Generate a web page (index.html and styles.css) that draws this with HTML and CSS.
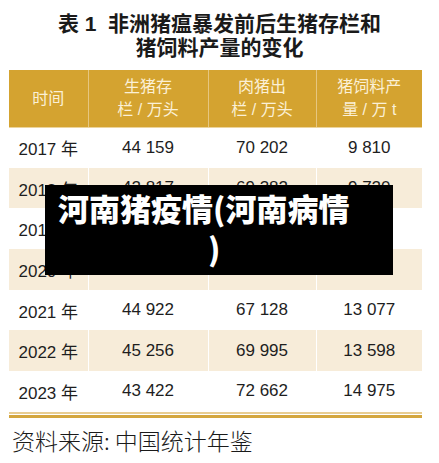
FILE: index.html
```html
<!DOCTYPE html>
<html lang="zh-CN">
<head>
  <meta charset="UTF-8" />
  <meta name="viewport" content="width=device-width, initial-scale=1.0"/>
  <title>河南猪疫情</title>
  <link rel="stylesheet" href="styles.css">
</head>
<body>

  <h1 class="title">表 1&nbsp; 非洲猪瘟暴发前后生猪存栏和<br>猪饲料产量的变化</h1>

  <table class="data">
    <colgroup>
      <col class="c1"><col class="c2"><col class="c3"><col class="c4">
    </colgroup>
    <thead>
      <tr>
        <th>时间</th>
        <th>生猪存<br>栏 / 万头</th>
        <th>肉猪出<br>栏 / 万头</th>
        <th>猪饲料产<br>量 / 万 t</th>
      </tr>
    </thead>
    <tbody>
      <tr><td>2017 年</td><td>44 159</td><td>70 202</td><td>9 810</td></tr>
      <tr><td>2018 年</td><td>42 817</td><td>69 382</td><td>9 720</td></tr>
      <tr><td>2019 年</td><td>31 041</td><td>54 419</td><td>7 663</td></tr>
      <tr><td>2020 年</td><td>40 650</td><td>52 704</td><td>8 923</td></tr>
      <tr><td>2021 年</td><td>44 922</td><td>67 128</td><td>13 077</td></tr>
      <tr><td>2022 年</td><td>45 256</td><td>69 995</td><td>13 598</td></tr>
      <tr><td>2023 年</td><td>43 422</td><td>72 662</td><td>14 975</td></tr>
    </tbody>
  </table>
  <div class="rule"></div>

  <p class="source">资料来源: 中国统计年鉴</p>

  <!-- caption banner over the table -->
  <div class="banner">河南猪疫情(河南病情<span class="tail">)</span></div>

</body>
</html>
```

FILE: styles.css
```css
* {
  box-sizing: border-box;
}
body {
  margin: 0;
  padding: 0 9px;
  width: 439px;
  height: 463px;
  overflow: hidden;
  background: #fff;
  font-family: "Liberation Sans", "Noto Sans CJK SC", sans-serif;
  color: #1e1e1e;
  position: relative;
}

.title {
  margin: 0 0 10px;
  padding-top: 12px;
  font-family: "Liberation Sans", "Noto Sans CJK SC", sans-serif;
  font-size: 21px;
  line-height: 24px;
  font-weight: 700;
  text-align: center;
  color: #1a1a1a;
}

.data {
  width: 413px;
  border-collapse: collapse;
  table-layout: fixed;
}
.c1 { width: 79px; }
.c2 { width: 120px; }
.c3 { width: 108px; }
.c4 { width: 106px; }

.data th {
  height: 57px;
  padding: 0;
  background: #d4a330;
  color: #fbf0d6;
  font-weight: normal;
  font-size: 16px;
  line-height: 23px;
  border-right: 1px solid #e6c680;
  border-bottom: 1px solid #ecd49c;
}
.data th:last-child,
.data td:last-child {
  border-right: none;
}

.data td {
  height: 40.7px;
  padding: 0;
  font-size: 17px;
  text-align: center;
  border-right: 1px solid #fff;
}
.data tbody tr:nth-child(even) td {
  background: #f7ecd9;
}

.rule {
  width: 413px;
  height: 1px;
  border-top: 2px solid #e8cd92;
  border-bottom: 3px solid #d4a63e;
  box-sizing: content-box;
}

.source {
  margin: 7px 0 0 3px;
  font-family: "Noto Sans CJK SC", sans-serif;
  font-size: 23px;
  line-height: 30px;
  font-weight: 300;
  color: #1a1a1a;
}

.banner {
  position: absolute;
  left: 45px;
  top: 185px;
  width: 348px;
  height: 90px;
  padding: 3px 0 0 13px;
  background: #000;
  color: #fff;
  font-family: "Noto Sans CJK SC", sans-serif;
  font-weight: 900;
  font-size: 31px;
  line-height: 40px;
}
.banner .tail {
  display: block;
  padding-left: 150px;
}
```
